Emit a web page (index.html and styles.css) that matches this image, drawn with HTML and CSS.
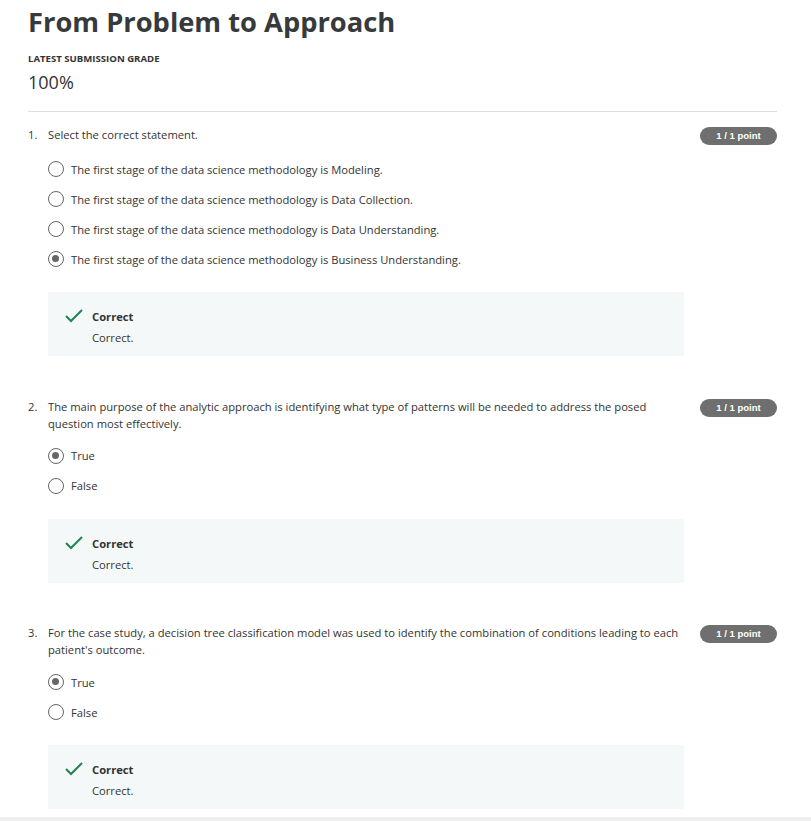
FILE: index.html
```html
<!DOCTYPE html>
<html lang="en">
<head>
<meta charset="utf-8">
<title>From Problem to Approach</title>
<link rel="stylesheet" href="styles.css">
</head>
<body>
<div class="page">
  <h1 class="title">From Problem to Approach</h1>
  <div class="grade-label">LATEST SUBMISSION GRADE</div>
  <div class="grade-value">100%</div>
  <hr class="divider">

  <div class="question">
    <div class="q-head">
      <span class="q-num">1.</span>
      <div class="q-text">Select the correct statement.</div>
      <span class="badge">1 / 1 point</span>
    </div>
    <div class="options">
      <div class="option"><span class="radio"></span><span>The first stage of the data science methodology is Modeling.</span></div>
      <div class="option"><span class="radio"></span><span>The first stage of the data science methodology is Data Collection.</span></div>
      <div class="option"><span class="radio"></span><span>The first stage of the data science methodology is Data Understanding.</span></div>
      <div class="option"><span class="radio checked"></span><span>The first stage of the data science methodology is Business Understanding.</span></div>
    </div>
    <div class="feedback">
      <svg class="check" width="18" height="14" viewBox="0 0 18 14"><polyline points="1,7 6,12 17,1" fill="none" stroke="#1f8354" stroke-width="2"/></svg>
      <div class="fb-text">
        <div class="fb-title">Correct</div>
        <div class="fb-body">Correct.</div>
      </div>
    </div>
  </div>

  <div class="question">
    <div class="q-head">
      <span class="q-num">2.</span>
      <div class="q-text">The main purpose of the analytic approach is identifying what type of patterns will be needed to address the posed question most effectively.</div>
      <span class="badge">1 / 1 point</span>
    </div>
    <div class="options">
      <div class="option"><span class="radio checked"></span><span>True</span></div>
      <div class="option"><span class="radio"></span><span>False</span></div>
    </div>
    <div class="feedback">
      <svg class="check" width="18" height="14" viewBox="0 0 18 14"><polyline points="1,7 6,12 17,1" fill="none" stroke="#1f8354" stroke-width="2"/></svg>
      <div class="fb-text">
        <div class="fb-title">Correct</div>
        <div class="fb-body">Correct.</div>
      </div>
    </div>
  </div>

  <div class="question">
    <div class="q-head">
      <span class="q-num">3.</span>
      <div class="q-text">For the case study, a decision tree classification model was used to identify the combination of conditions leading to each patient's outcome.</div>
      <span class="badge">1 / 1 point</span>
    </div>
    <div class="options">
      <div class="option"><span class="radio checked"></span><span>True</span></div>
      <div class="option"><span class="radio"></span><span>False</span></div>
    </div>
    <div class="feedback">
      <svg class="check" width="18" height="14" viewBox="0 0 18 14"><polyline points="1,7 6,12 17,1" fill="none" stroke="#1f8354" stroke-width="2"/></svg>
      <div class="fb-text">
        <div class="fb-title">Correct</div>
        <div class="fb-body">Correct.</div>
      </div>
    </div>
  </div>
</div>
<div class="footer-bar"></div>
</body>
</html>
```

FILE: styles.css
```css
html, body {
  margin: 0;
  padding: 0;
  background: #fff;
  overflow: hidden;
}
body {
  font-family: "Open Sans", "DejaVu Sans", sans-serif;
  color: #333;
}
.page {
  padding: 5px 34px 0 28px;
}
.title {
  margin: 0;
  font-size: 27.3px;
  line-height: 34px;
  font-weight: 700;
  color: #373a3c;
}
.grade-label {
  margin-top: 14px;
  font-size: 9.6px;
  line-height: 12px;
  font-weight: 700;
  color: #333;
}
.grade-value {
  margin-top: 5px;
  font-size: 18px;
  line-height: 24px;
  color: #333;
}
.divider {
  margin: 17px 0 0 0;
  border: 0;
  border-top: 1px solid #ddd;
  height: 0;
}
.question {
  margin-top: 14px;
}
.question + .question {
  margin-top: 41.5px;
}
.q-head {
  display: flex;
  align-items: flex-start;
  font-size: 11.2px;
  line-height: 17px;
}
.q-num {
  width: 20px;
  flex: none;
}
.q-text {
  width: 636px;
  flex: none;
}
.badge {
  margin-left: auto;
  margin-top: 1px;
  width: 77px;
  height: 18px;
  border-radius: 9px;
  background: #6f6f6f;
  color: #fff;
  font-family: "Liberation Sans", Arial, sans-serif;
  font-weight: 700;
  font-size: 9.5px;
  line-height: 18px;
  text-align: center;
}
.options {
  margin-top: 9px;
  padding-left: 20px;
}
.option {
  display: flex;
  align-items: center;
  height: 30px;
  font-size: 11.2px;
  gap: 7px;
}
.radio {
  box-sizing: border-box;
  width: 16px;
  height: 16px;
  border: 1.5px solid #666;
  border-radius: 50%;
  flex: none;
  position: relative;
}
.radio.checked::after {
  content: "";
  position: absolute;
  left: 3px;
  top: 3px;
  width: 7px;
  height: 7px;
  border-radius: 50%;
  background: #666;
}
.feedback {
  margin: 18px 0 0 20px;
  width: 636px;
  box-sizing: border-box;
  background: #f5f8f8;
  padding: 16px 0 10px 17px;
  display: flex;
  align-items: flex-start;
  gap: 9px;
}
.check {
  margin-top: 1px;
  flex: none;
}
.fb-text {
  font-size: 11.2px;
  line-height: 17px;
}
.fb-title {
  font-weight: 700;
  color: #333;
}
.fb-body {
  margin-top: 4px;
}
.footer-bar {
  margin-top: 8px;
  height: 30px;
  background: #eee;
}
```
